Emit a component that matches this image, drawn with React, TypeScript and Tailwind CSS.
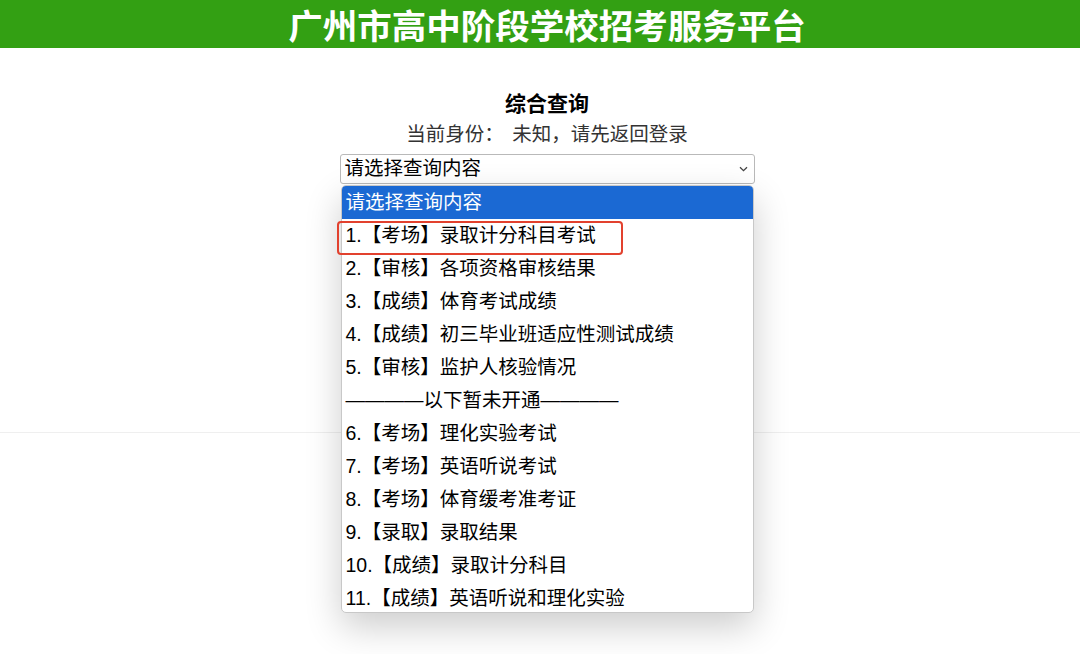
import React from "react";

const options = [
  "1.【考场】录取计分科目考试",
  "2.【审核】各项资格审核结果",
  "3.【成绩】体育考试成绩",
  "4.【成绩】初三毕业班适应性测试成绩",
  "5.【审核】监护人核验情况",
  "————以下暂未开通————",
  "6.【考场】理化实验考试",
  "7.【考场】英语听说考试",
  "8.【考场】体育缓考准考证",
  "9.【录取】录取结果",
  "10.【成绩】录取计分科目",
  "11.【成绩】英语听说和理化实验",
];

export default function App() {
  return (
    <div
      className="min-h-[654px] w-full bg-white text-black"
      style={{ fontFamily: '"Liberation Sans", "Noto Sans CJK SC", sans-serif' }}
    >
      <header className="flex h-[48px] items-center justify-center bg-[#33a013] pl-[14px]">
        <h1
          className="text-[34.5px] font-bold leading-none text-white"
          style={{ fontFamily: '"Noto Sans CJK SC", sans-serif' }}
        >
          广州市高中阶段学校招考服务平台
        </h1>
      </header>
      <main className="flex h-[385px] flex-col items-center border-b border-[#efefef] pl-[14px] pt-[40px]">
        <h2
          className="h-[28px] text-[21px] font-bold leading-[28px]"
          style={{ fontFamily: '"Noto Sans CJK SC", sans-serif' }}
        >
          综合查询
        </h2>
        <p
          className="mt-[3px] h-[28px] text-[19.5px] leading-[28px] text-[#333]"
          style={{ fontFamily: '"Noto Sans CJK SC", sans-serif', fontWeight: 400 }}
        >
          当前身份：&nbsp;&nbsp;未知，请先返回登录
        </p>
        <div className="relative mt-[7px] w-[415px]">
          <div className="flex h-[30px] items-center justify-between rounded-[3px] border border-[#b9b9b9] bg-white pl-[4px] pr-[6px]">
            <span className="text-[19.5px] leading-none">请选择查询内容</span>
            <svg width="9" height="6" viewBox="0 0 9 6" fill="none">
              <path d="M1 1.2L4.5 4.6L8 1.2" stroke="#444" strokeWidth="1.3" />
            </svg>
          </div>
          <ul className="absolute left-[1px] top-[31px] z-10 w-[413px] overflow-hidden rounded-[5px] border border-[#c8c8c8] bg-white shadow-[0_14px_36px_rgba(0,0,0,0.2)]">
            <li className="flex h-[33px] items-center bg-[#1b69d3] pl-[4px] text-[19.5px] text-white">
              请选择查询内容
            </li>
            {options.map((o, i) => (
              <li
                key={o}
                className={
                  i === options.length - 1
                    ? "flex h-[30px] items-start overflow-hidden pl-[4px] pt-[3px] text-[19.5px] leading-[26px] text-black"
                    : "flex h-[33px] items-center pl-[4px] text-[19.5px] text-black"
                }
              >
                {o}
              </li>
            ))}
          </ul>
          <div className="pointer-events-none absolute left-[-3px] top-[67px] z-20 h-[34px] w-[286px] rounded-[4px] border-2 border-[#e2412e]" />
        </div>
      </main>
    </div>
  );
}
